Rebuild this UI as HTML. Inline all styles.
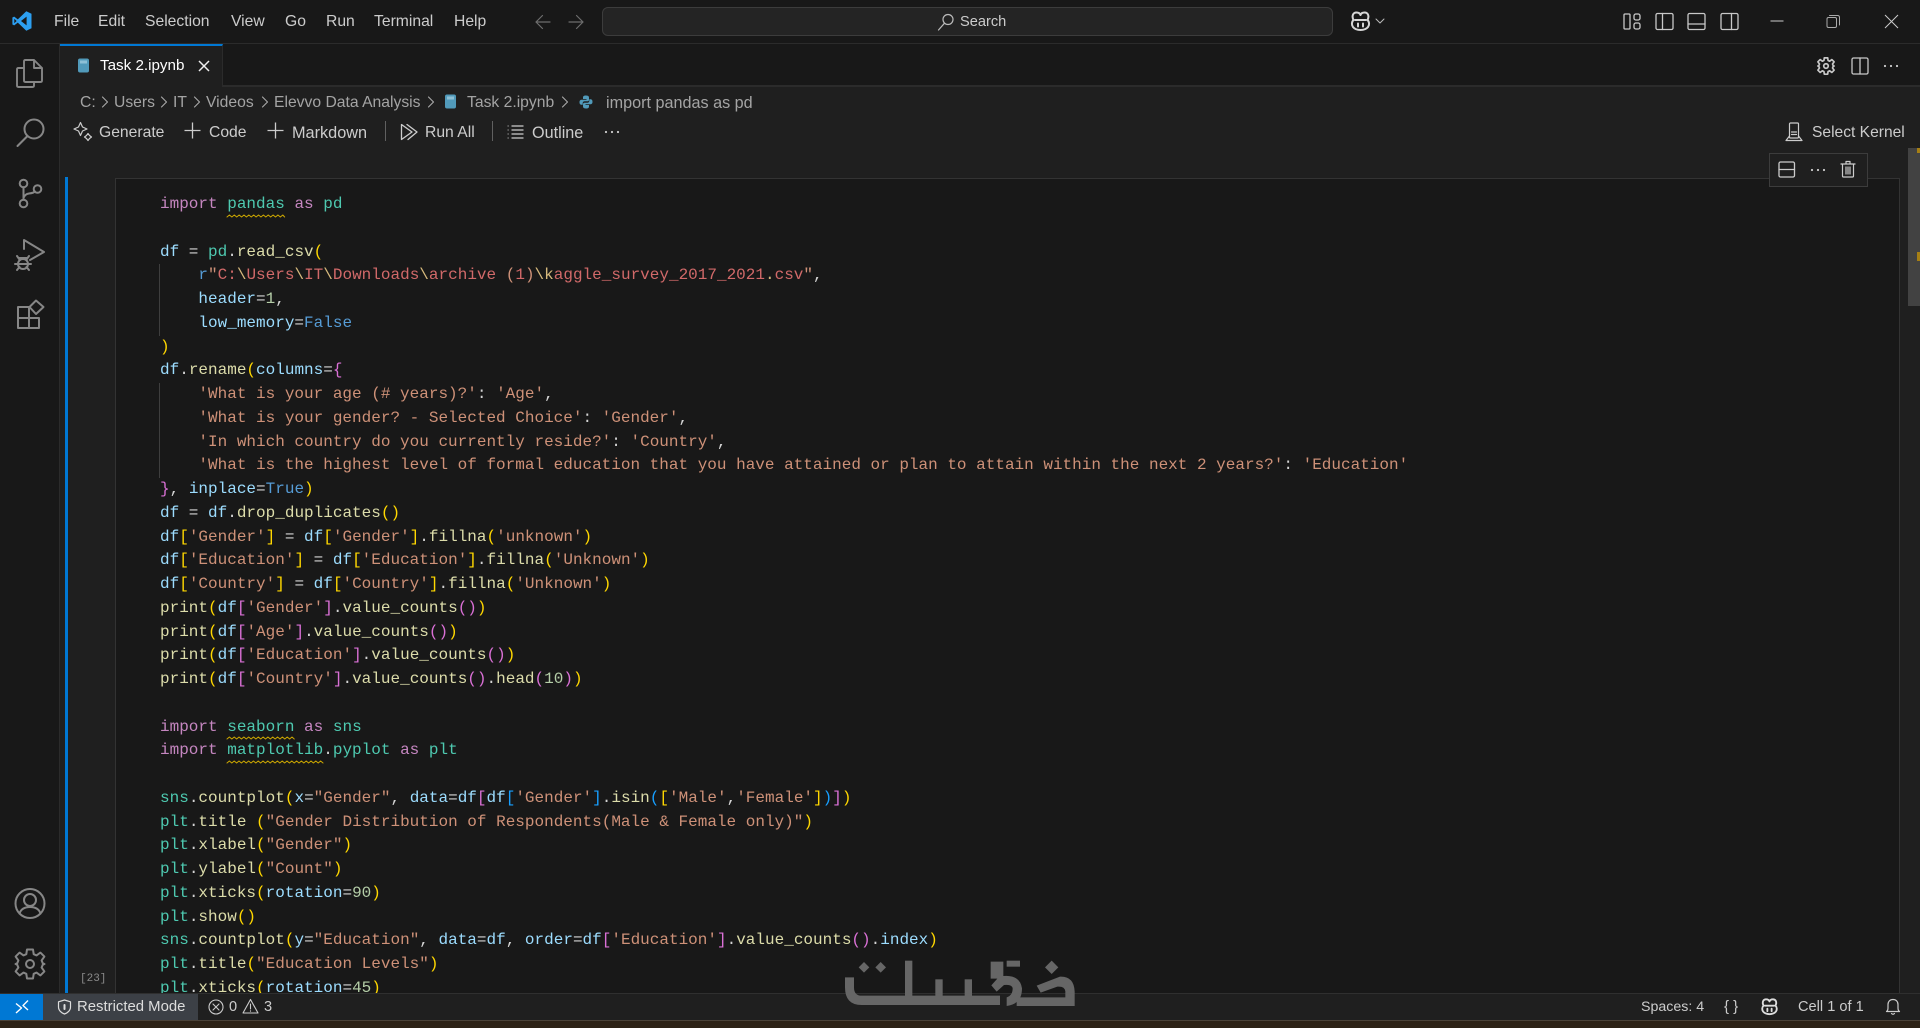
<!DOCTYPE html>
<html lang="en">
<head>
<meta charset="utf-8">
<title>Task 2.ipynb</title>
<style>
html,body{margin:0;padding:0;width:1920px;height:1028px;overflow:hidden;background:#1f1f1f}
*{box-sizing:border-box}
.a{position:absolute}
.t{position:absolute;font:15.7px/20px "Liberation Sans",sans-serif;color:#ccc;white-space:pre}
.bc{color:#a4a4a4}
.st{font-size:14.6px;color:#ccc}
svg{position:absolute;overflow:visible;fill:none;stroke-linecap:round;stroke-linejoin:round}
svg.dots{fill:#ccc}
#code{position:absolute;left:160px;top:193.2px;font:16px/23.75px "Liberation Mono",monospace;color:#d4d4d4;white-space:pre;margin:0}
#code div{height:23.75px}
.k{color:#c586c0}.m{color:#4ec9b0}.v{color:#9cdcfe}.f{color:#dcdcaa}.s{color:#ce9178}.n{color:#b5cea8}.c{color:#569cd6}.r{color:#d16969}.y{color:#ffd700}.p{color:#da70d6}.b{color:#179fff}.e{color:#d7ba7d}
.w{position:relative}
.w svg{left:0;top:18.5px;width:100%;height:4px}
</style>
</head>
<body>
<!-- title bar -->
<div class="a" style="left:0;top:0;width:1920px;height:44px;background:#181818;border-bottom:1px solid #2b2b2b"></div>
<svg style="left:12px;top:11px" width="20" height="20" viewBox="0 0 20 20"><path d="M14.3 0.3 19.5 2.8V17.2L14.3 19.7 5.8 11.6 2.2 14.4.4 13.5V6.5L2.2 5.6 5.8 8.4Z M14.6 5.6 9 10l5.6 4.4Z M2.3 7.7V12.3L4.6 10Z" fill="#2c9ff1" fill-rule="evenodd"/></svg>
<div class="t" style="left:54px;top:12px">File</div>
<div class="t" style="left:98px;top:12px">Edit</div>
<div class="t" style="left:145px;top:12px">Selection</div>
<div class="t" style="left:231px;top:12px">View</div>
<div class="t" style="left:285px;top:12px">Go</div>
<div class="t" style="left:326px;top:12px">Run</div>
<div class="t" style="left:374px;top:12px">Terminal</div>
<div class="t" style="left:454px;top:12px">Help</div>
<svg style="left:535px;top:14px" width="16" height="16" stroke="#6d6d6d" stroke-width="1.2"><path d="M1 8H15M1 8 7.5 1.5M1 8 7.5 14.5"/></svg>
<svg style="left:568px;top:14px" width="16" height="16" stroke="#6d6d6d" stroke-width="1.2"><path d="M1 8H15M15 8 8.5 1.5M15 8 8.5 14.5"/></svg>
<div class="a" style="left:602px;top:7px;width:731px;height:29px;background:#242424;border:1px solid #3c3c3c;border-radius:6px"></div>
<svg style="left:937px;top:13px" width="18" height="18" stroke="#bbb" stroke-width="1.2"><circle cx="11" cy="6.5" r="5"/><path d="M7.5 10.2 1.5 17"/></svg>
<div class="t" style="left:960px;top:12px;font-size:14.6px">Search</div>
<!-- copilot top -->
<svg style="left:1350px;top:11px" width="21" height="20" viewBox="0 0 21 20" stroke="#d6d6d6" stroke-width="2"><path d="M3.5 9C1.5 5 3 1.5 6.5 1.5 8.5 1.5 10 2.5 10.5 4 11 2.5 12.5 1.5 14.5 1.5 18 1.5 19.5 5 17.5 9 19.5 11 19.5 14 18 16 16 18.5 13.5 19 10.5 19S5 18.5 3 16C1.5 14 1.5 11 3.5 9Z"/><path d="M5 9H16M8 12.5V15.5M13 12.5V15.5"/></svg>
<svg style="left:1375px;top:18px" width="10" height="7" stroke="#bbb" stroke-width="1"><path d="M1 1 5 5 9 1"/></svg>
<!-- layout icons -->
<svg style="left:1623px;top:12px" width="18" height="18" stroke="#c8c8c8" stroke-width="1.3"><rect x="1" y="2" width="6" height="15" rx="1"/><rect x="11" y="2" width="6" height="6" rx="1.8"/><rect x="11" y="11" width="6" height="6" rx="1.8"/></svg>
<svg style="left:1655px;top:12px" width="18" height="18" stroke="#c8c8c8" stroke-width="1.3"><rect x="1" y="1.5" width="17" height="16" rx="1.5"/><path d="M7.5 1.5V17.5"/></svg>
<svg style="left:1687px;top:12px" width="18" height="18" stroke="#c8c8c8" stroke-width="1.3"><rect x="1" y="1.5" width="17" height="16" rx="1.5"/><path d="M1 12H18"/></svg>
<svg style="left:1720px;top:12px" width="18" height="18" stroke="#c8c8c8" stroke-width="1.3"><rect x="1" y="1.5" width="17" height="16" rx="1.5"/><path d="M11.5 1.5V17.5"/></svg>
<svg style="left:1770px;top:20px" width="14" height="3" stroke="#ccc" stroke-width="1"><path d="M.5 1H13.5" stroke-linecap="butt"/></svg>
<svg style="left:1826px;top:14px" width="15" height="15" stroke="#aaa" stroke-width="1"><rect x="1" y="3.5" width="9.5" height="10" rx="1.5"/><path d="M3.5 1.5H11.5Q13.5 1.5 13.5 3.5V11"/></svg>
<svg style="left:1884px;top:14px" width="15" height="15" stroke="#ccc" stroke-width="1"><path d="M1 1 14 14M14 1 1 14" stroke-linecap="butt"/></svg>

<!-- activity bar -->
<div class="a" style="left:0;top:44px;width:60px;height:949px;background:#181818;border-right:1px solid #2b2b2b"></div>
<svg style="left:15px;top:58px" width="30" height="32" stroke="#868686" stroke-width="1.9"><path d="M9 22V3.5Q9 2 10.5 2H19L27 10V22.5Q27 24 25.5 24H10.5Q9 24 9 22.5Z M19 2V10H27"/><path d="M9 10H3.5Q2 10 2 11.5V27.5Q2 29 3.5 29H17.5Q19 29 19 27.5V24"/></svg>
<svg style="left:16px;top:118px" width="30" height="30" stroke="#868686" stroke-width="2"><circle cx="18" cy="11" r="9.5"/><path d="M11.5 18 1.5 28"/></svg>
<svg style="left:17px;top:178px" width="26" height="32" stroke="#868686" stroke-width="2"><circle cx="6.5" cy="5.5" r="3.8"/><circle cx="6.5" cy="25.5" r="3.8"/><circle cx="20.5" cy="11" r="3.8"/><path d="M6.5 9.3V21.7M6.5 20Q8 16 12 15.5 16.5 15 18 13.5"/></svg>
<svg style="left:14px;top:238px" width="32" height="34" stroke="#868686" stroke-width="2"><path d="M10 11V2L30 14 16 22"/><circle cx="9" cy="26" r="5"/><path d="M5.5 21.5 3 18M12.5 21.5 15 18M1 26H17M3 32 5.5 29M15 32 12.5 29M5 20H13"/></svg>
<svg style="left:16px;top:299px" width="30" height="30" stroke="#868686" stroke-width="2"><rect x="2" y="8" width="11" height="11"/><rect x="2" y="19" width="11" height="10"/><rect x="13" y="19" width="10" height="10"/><path d="M20 1.5 27.5 8 20 15 13.5 8Z"/></svg>
<svg style="left:14px;top:888px" width="32" height="32" stroke="#868686" stroke-width="2"><circle cx="16" cy="15.5" r="14.5"/><circle cx="16" cy="12" r="6"/><path d="M5.5 25.5C7 21 11 19 16 19S25 21 26.5 25.5"/></svg>
<svg style="left:14px;top:948px" width="32" height="32" viewBox="0 0 32 32" stroke="#868686" stroke-width="2"><path d="M13 1.5H19L19.7 6.2 22.5 7.4 26.4 4.6 30.4 8.6 27.6 12.5 28.8 15.3 30.5 16 28.8 16.7 27.6 19.5 30.4 23.4 26.4 27.4 22.5 24.6 19.7 25.8 19 30.5H13L12.3 25.8 9.5 24.6 5.6 27.4 1.6 23.4 4.4 19.5 3.2 16.7 1.5 16 3.2 15.3 4.4 12.5 1.6 8.6 5.6 4.6 9.5 7.4 12.3 6.2Z"/><circle cx="16" cy="16" r="4"/></svg>

<!-- tabs row -->
<div class="a" style="left:60px;top:44px;width:1860px;height:43px;background:#181818;border-bottom:2px solid #2b2b2b"></div>
<div class="a" style="left:60px;top:44px;width:163px;height:43px;background:#1f1f1f;border-top:2px solid #0078d4;border-right:1px solid #2b2b2b"></div>
<svg style="left:77px;top:58px" width="13" height="15"><rect x="1" y="0.5" width="11" height="14" rx="2" fill="#519aba"/><rect x="3" y="2.5" width="7" height="3" fill="#8dc0d6"/></svg>
<div class="t" style="left:100px;top:56px;color:#fff;font-size:15.2px">Task 2.ipynb</div>
<svg style="left:198px;top:60px" width="12" height="12" stroke="#eee" stroke-width="1.5"><path d="M1 1 11 11M11 1 1 11" stroke-linecap="butt"/></svg>
<!-- tab actions -->
<svg style="left:1817px;top:57px" width="18" height="18" viewBox="0 0 32 32" stroke="#c8c8c8" stroke-width="3"><path d="M13 1.5H19L19.7 6.2 22.5 7.4 26.4 4.6 30.4 8.6 27.6 12.5 28.8 15.3 30.5 16 28.8 16.7 27.6 19.5 30.4 23.4 26.4 27.4 22.5 24.6 19.7 25.8 19 30.5H13L12.3 25.8 9.5 24.6 5.6 27.4 1.6 23.4 4.4 19.5 3.2 16.7 1.5 16 3.2 15.3 4.4 12.5 1.6 8.6 5.6 4.6 9.5 7.4 12.3 6.2Z"/><circle cx="16" cy="16" r="4"/></svg>
<svg style="left:1851px;top:57px" width="18" height="18" stroke="#c8c8c8" stroke-width="1.3"><rect x="1" y="1" width="16" height="16" rx="1.5"/><path d="M9 1V17"/></svg>
<svg class="dots" style="left:1883px;top:64px" width="16" height="4"><circle cx="2" cy="2" r="1.1"/><circle cx="8" cy="2" r="1.1"/><circle cx="14" cy="2" r="1.1"/></svg>

<!-- breadcrumbs -->
<div class="t bc" style="left:80px;top:93px">C:</div>
<svg style="left:101px;top:96px" width="8" height="12" stroke="#aaa" stroke-width="1.1"><path d="M1.5 1 6.5 6 1.5 11"/></svg>
<div class="t bc" style="left:114px;top:93px">Users</div>
<svg style="left:160px;top:96px" width="8" height="12" stroke="#aaa" stroke-width="1.1"><path d="M1.5 1 6.5 6 1.5 11"/></svg>
<div class="t bc" style="left:173px;top:93px">IT</div>
<svg style="left:193px;top:96px" width="8" height="12" stroke="#aaa" stroke-width="1.1"><path d="M1.5 1 6.5 6 1.5 11"/></svg>
<div class="t bc" style="left:206px;top:93px">Videos</div>
<svg style="left:261px;top:96px" width="8" height="12" stroke="#aaa" stroke-width="1.1"><path d="M1.5 1 6.5 6 1.5 11"/></svg>
<div class="t bc" style="left:274px;top:93px">Elevvo Data Analysis</div>
<svg style="left:427px;top:96px" width="8" height="12" stroke="#aaa" stroke-width="1.1"><path d="M1.5 1 6.5 6 1.5 11"/></svg>
<svg style="left:444px;top:94px" width="13" height="15"><rect x="1" y="0.5" width="11" height="14" rx="2" fill="#519aba"/><rect x="3" y="2.5" width="7" height="3" fill="#8dc0d6"/></svg>
<div class="t bc" style="left:467px;top:93px">Task 2.ipynb</div>
<svg style="left:561px;top:96px" width="8" height="12" stroke="#aaa" stroke-width="1.1"><path d="M1.5 1 6.5 6 1.5 11"/></svg>
<svg style="left:579px;top:95px" width="14" height="14" viewBox="0 0 14 14"><path d="M7 .5C4.5.5 4 1.5 4 2.5V4H7.5V4.8H2.5C1 4.800.5 6 .5 7.3S1 9.800 2.5 9.800H3.7V8.300C3.700 7 4.500 6.300 5.700 6.300H8.500C9.500 6.300 10 5.500 10 4.700V2.500C10 1.300 9 .5 7 .5Z" fill="#519aba"/><path d="M7 13.500C9.500 13.500 10 12.500 10 11.500V10H6.500V9.200H11.500C13 9.200 13.500 8 13.500 6.700S13 4.200 11.500 4.200H10.300V5.700C10.300 7 9.500 7.700 8.300 7.700H5.500C4.500 7.700 4 8.500 4 9.300V11.500C4 12.700 5 13.500 7 13.500Z" fill="#519aba"/></svg>
<div class="t bc" style="left:606px;top:93px;font-size:16.2px">import pandas as pd</div>

<!-- toolbar -->
<svg style="left:73px;top:121px" width="20" height="20" stroke="#ccc" stroke-width="1.2"><path d="M7.5 1.5 9.5 6 14 8 9.5 10 7.5 14.5 5.5 10 1 8 5.5 6Z"/><path d="M15 12.500 16.500 14.500 18.500 16 16.500 17.500 15 19.500 13.500 17.500 11.500 16 13.500 14.500Z"/></svg>
<div class="t" style="left:99px;top:123px">Generate</div>
<svg style="left:184px;top:122px" width="17" height="17" stroke="#ccc" stroke-width="1.3"><path d="M8.500 .5V16.500M.5 8.500H16.500" stroke-linecap="butt"/></svg>
<div class="t" style="left:209px;top:123px">Code</div>
<svg style="left:267px;top:122px" width="17" height="17" stroke="#ccc" stroke-width="1.3"><path d="M8.500 .5V16.500M.5 8.500H16.500" stroke-linecap="butt"/></svg>
<div class="t" style="left:292px;top:123px;font-size:16.3px">Markdown</div>
<div class="a" style="left:385px;top:121px;width:1px;height:20px;background:#606060"></div>
<svg style="left:400px;top:123px" width="18" height="18" stroke="#ccc" stroke-width="1.3"><path d="M1.500 1.500V16.500L12 9Z"/><path d="M7 1.500 17 9 8 16.500"/></svg>
<div class="t" style="left:425px;top:123px">Run All</div>
<div class="a" style="left:492px;top:121px;width:1px;height:20px;background:#606060"></div>
<svg style="left:507px;top:125px" width="17" height="14" stroke="#ccc" stroke-width="1.2"><path d="M4.500 1H16.500M4.500 5H16.500M4.500 9H16.500M4.500 13H16.500M.7 1H1.500M.7 5H1.500M.7 9H1.500M.7 13H1.500" stroke-linecap="butt"/></svg>
<div class="t" style="left:532px;top:123px;font-size:16.2px">Outline</div>
<svg class="dots" style="left:604px;top:130px" width="16" height="4"><circle cx="2" cy="2" r="1.1"/><circle cx="8" cy="2" r="1.1"/><circle cx="14" cy="2" r="1.1"/></svg>
<svg style="left:1785px;top:122px" width="18" height="20" stroke="#ccc" stroke-width="1.2"><rect x="4.500" y="1" width="9" height="15" rx="1"/><path d="M6.500 10H11.500M6.500 12.500H11.500M4.500 14 1 18.500H17L13.500 14"/></svg>
<div class="t" style="left:1812px;top:123px;font-size:15.6px">Select Kernel</div>

<!-- cell -->
<div class="a" style="left:65px;top:177px;width:3px;height:816px;background:#0078d4"></div>
<div class="a" style="left:115px;top:178px;width:1785px;height:815px;background:#181818;border:1px solid #333;border-bottom:0"></div>
<div class="a" style="left:159px;top:264px;width:1px;height:72px;background:#3e3e3e"></div>
<div class="a" style="left:159px;top:383px;width:1px;height:95px;background:#3e3e3e"></div>
<div class="t" style="left:80px;top:969px;font:11px/20px 'Liberation Mono',monospace;color:#8a8a8a">[23]</div>

<div class="a" style="left:0;top:0;width:1920px;height:993px;overflow:hidden;pointer-events:none">
<pre id="code"><div><span class="k">import</span> <span class="m w">pandas<svg viewBox="0 0 57 4" preserveAspectRatio="none" stroke="#cca700" stroke-width="1"><path d="M0 3 2.400 1 4.800 3 7.200 1 9.600 3 12 1 14.400 3 16.800 1 19.200 3 21.600 1 24 3 26.400 1 28.800 3 31.200 1 33.600 3 36 1 38.400 3 40.800 1 43.200 3 45.600 1 48 3 50.400 1 52.800 3 55.200 1 57 3"/></svg></span> <span class="k">as</span> <span class="m">pd</span></div><div> </div><div><span class="v">df</span> = <span class="m">pd</span>.<span class="f">read_csv</span><span class="y">(</span></div><div>    <span class="c">r</span><span class="s">"</span><span class="r">C:</span><span class="e">\</span><span class="r">Users</span><span class="e">\</span><span class="r">IT</span><span class="e">\</span><span class="r">Downloads</span><span class="e">\</span><span class="r">archive </span><span class="s">(</span><span class="r">1</span><span class="s">)</span><span class="e">\k</span><span class="r">aggle_survey_2017_2021</span><span class="e">.</span><span class="r">csv</span><span class="s">"</span>,</div><div>    <span class="v">header</span>=<span class="n">1</span>,</div><div>    <span class="v">low_memory</span>=<span class="c">False</span></div><div><span class="y">)</span></div><div><span class="v">df</span>.<span class="f">rename</span><span class="y">(</span><span class="v">columns</span>=<span class="p">{</span></div><div>    <span class="s">'What is your age (# years)?'</span>: <span class="s">'Age'</span>,</div><div>    <span class="s">'What is your gender? - Selected Choice'</span>: <span class="s">'Gender'</span>,</div><div>    <span class="s">'In which country do you currently reside?'</span>: <span class="s">'Country'</span>,</div><div>    <span class="s">'What is the highest level of formal education that you have attained or plan to attain within the next 2 years?'</span>: <span class="s">'Education'</span></div><div><span class="p">}</span>, <span class="v">inplace</span>=<span class="c">True</span><span class="y">)</span></div><div><span class="v">df</span> = <span class="v">df</span>.<span class="f">drop_duplicates</span><span class="y">()</span></div><div><span class="v">df</span><span class="y">[</span><span class="s">'Gender'</span><span class="y">]</span> = <span class="v">df</span><span class="y">[</span><span class="s">'Gender'</span><span class="y">]</span>.<span class="f">fillna</span><span class="y">(</span><span class="s">'unknown'</span><span class="y">)</span></div><div><span class="v">df</span><span class="y">[</span><span class="s">'Education'</span><span class="y">]</span> = <span class="v">df</span><span class="y">[</span><span class="s">'Education'</span><span class="y">]</span>.<span class="f">fillna</span><span class="y">(</span><span class="s">'Unknown'</span><span class="y">)</span></div><div><span class="v">df</span><span class="y">[</span><span class="s">'Country'</span><span class="y">]</span> = <span class="v">df</span><span class="y">[</span><span class="s">'Country'</span><span class="y">]</span>.<span class="f">fillna</span><span class="y">(</span><span class="s">'Unknown'</span><span class="y">)</span></div><div><span class="f">print</span><span class="y">(</span><span class="v">df</span><span class="p">[</span><span class="s">'Gender'</span><span class="p">]</span>.<span class="f">value_counts</span><span class="p">()</span><span class="y">)</span></div><div><span class="f">print</span><span class="y">(</span><span class="v">df</span><span class="p">[</span><span class="s">'Age'</span><span class="p">]</span>.<span class="f">value_counts</span><span class="p">()</span><span class="y">)</span></div><div><span class="f">print</span><span class="y">(</span><span class="v">df</span><span class="p">[</span><span class="s">'Education'</span><span class="p">]</span>.<span class="f">value_counts</span><span class="p">()</span><span class="y">)</span></div><div><span class="f">print</span><span class="y">(</span><span class="v">df</span><span class="p">[</span><span class="s">'Country'</span><span class="p">]</span>.<span class="f">value_counts</span><span class="p">()</span>.<span class="f">head</span><span class="p">(</span><span class="n">10</span><span class="p">)</span><span class="y">)</span></div><div> </div><div><span class="k">import</span> <span class="m w">seaborn<svg viewBox="0 0 67 4" preserveAspectRatio="none" stroke="#cca700" stroke-width="1"><path d="M0 3 2.400 1 4.800 3 7.200 1 9.600 3 12 1 14.400 3 16.800 1 19.200 3 21.600 1 24 3 26.400 1 28.800 3 31.200 1 33.600 3 36 1 38.400 3 40.800 1 43.200 3 45.600 1 48 3 50.400 1 52.800 3 55.200 1 57.600 3 60 1 62.400 3 64.800 1 67 3"/></svg></span> <span class="k">as</span> <span class="m">sns</span></div><div><span class="k">import</span> <span class="m w">matplotlib<svg viewBox="0 0 96 4" preserveAspectRatio="none" stroke="#cca700" stroke-width="1"><path d="M0 3 2.400 1 4.800 3 7.200 1 9.600 3 12 1 14.400 3 16.800 1 19.200 3 21.600 1 24 3 26.400 1 28.800 3 31.200 1 33.600 3 36 1 38.400 3 40.800 1 43.200 3 45.600 1 48 3 50.400 1 52.800 3 55.200 1 57.600 3 60 1 62.400 3 64.800 1 67.200 3 69.600 1 72 3 74.400 1 76.800 3 79.200 1 81.600 3 84 1 86.400 3 88.800 1 91.200 3 93.600 1 96 3"/></svg></span>.<span class="m">pyplot</span> <span class="k">as</span> <span class="m">plt</span></div><div> </div><div><span class="m">sns</span>.<span class="f">countplot</span><span class="y">(</span><span class="v">x</span>=<span class="s">"Gender"</span>, <span class="v">data</span>=<span class="v">df</span><span class="p">[</span><span class="v">df</span><span class="b">[</span><span class="s">'Gender'</span><span class="b">]</span>.<span class="f">isin</span><span class="b">(</span><span class="y">[</span><span class="s">'Male'</span>,<span class="s">'Female'</span><span class="y">]</span><span class="b">)</span><span class="p">]</span><span class="y">)</span></div><div><span class="m">plt</span>.<span class="f">title</span> <span class="y">(</span><span class="s">"Gender Distribution of Respondents(Male &amp; Female only)"</span><span class="y">)</span></div><div><span class="m">plt</span>.<span class="f">xlabel</span><span class="y">(</span><span class="s">"Gender"</span><span class="y">)</span></div><div><span class="m">plt</span>.<span class="f">ylabel</span><span class="y">(</span><span class="s">"Count"</span><span class="y">)</span></div><div><span class="m">plt</span>.<span class="f">xticks</span><span class="y">(</span><span class="v">rotation</span>=<span class="n">90</span><span class="y">)</span></div><div><span class="m">plt</span>.<span class="f">show</span><span class="y">()</span></div><div><span class="m">sns</span>.<span class="f">countplot</span><span class="y">(</span><span class="v">y</span>=<span class="s">"Education"</span>, <span class="v">data</span>=<span class="v">df</span>, <span class="v">order</span>=<span class="v">df</span><span class="p">[</span><span class="s">'Education'</span><span class="p">]</span>.<span class="f">value_counts</span><span class="p">()</span>.<span class="v">index</span><span class="y">)</span></div><div><span class="m">plt</span>.<span class="f">title</span><span class="y">(</span><span class="s">"Education Levels"</span><span class="y">)</span></div><div><span class="m">plt</span>.<span class="f">xticks</span><span class="y">(</span><span class="v">rotation</span>=<span class="n">45</span><span class="y">)</span></div></pre>
</div>

<!-- cell toolbar -->
<div class="a" style="left:1769px;top:153px;width:99px;height:34px;background:#1f1f1f;border:1px solid #3c3c3c"></div>
<svg style="left:1778px;top:161px" width="18" height="17" stroke="#ccc" stroke-width="1.3"><rect x="1" y="1" width="15.500" height="15" rx="1.500"/><path d="M1 8.500H16.500"/></svg>
<svg class="dots" style="left:1810px;top:168px" width="16" height="4"><circle cx="2" cy="2" r="1.1"/><circle cx="8" cy="2" r="1.1"/><circle cx="14" cy="2" r="1.1"/></svg>
<svg style="left:1840px;top:160px" width="16" height="18" stroke="#ccc" stroke-width="1.2"><path d="M1 4H15M6 4V1.500H10V4M2.500 4V16Q2.500 17 3.500 17H12.500Q13.500 17 13.500 16V4M6 7V14M8 7V14M10 7V14"/></svg>

<!-- scrollbar -->
<div class="a" style="left:1908px;top:148px;width:12px;height:158px;background:#424242"></div>
<div class="a" style="left:1917px;top:148px;width:3px;height:5px;background:#a67f14"></div>
<div class="a" style="left:1917px;top:252px;width:3px;height:9px;background:#a67f14"></div>

<!-- status bar -->
<div class="a" style="left:0;top:993px;width:1920px;height:28px;background:#1f1f1f;border-top:1px solid #2f2f2f"></div>
<div class="a" style="left:0;top:994px;width:43px;height:27px;background:#0078d4"></div>
<svg style="left:15px;top:999px" width="14" height="16" stroke="#fff" stroke-width="1.4"><path d="M1 14 6.500 9 1 4.500" stroke-linecap="butt"/><path d="M13 1.500 8 6.500 13 11" stroke-linecap="butt"/></svg>
<div class="a" style="left:43px;top:994px;width:155px;height:27px;background:#3c4046"></div>
<svg style="left:57px;top:999px" width="15" height="16" stroke="#ddd" stroke-width="1.2"><path d="M7.500 1 13.500 2.800V8C13.500 11.500 10.500 14 7.500 15 4.500 14 1.500 11.500 1.500 8V2.800Z"/><path d="M7.500 6V10" stroke-width="2"/></svg>
<div class="t st" style="left:77px;top:997px;color:#ddd;font-size:14.9px">Restricted Mode</div>
<svg style="left:208px;top:999px" width="16" height="16" stroke="#ccc" stroke-width="1.1"><circle cx="8" cy="8" r="7"/><path d="M5 5 11 11M11 5 5 11"/></svg>
<div class="t st" style="left:229px;top:997px">0</div>
<svg style="left:242px;top:998px" width="17" height="16" stroke="#ccc" stroke-width="1.1"><path d="M8.500 1.500 16 15H1Z"/><path d="M8.500 6V11M8.500 12.800V13.200"/></svg>
<div class="t st" style="left:264px;top:997px">3</div>
<div class="t st" style="left:1641px;top:997px;font-size:14.2px">Spaces: 4</div>
<div class="t" style="left:1724px;top:997px;font-size:15px">{ }</div>
<svg style="left:1760px;top:998px" width="19" height="17" viewBox="0 0 21 20" stroke="#ddd" stroke-width="2.2"><path d="M3.5 9C1.5 5 3 1.5 6.5 1.5 8.5 1.5 10 2.5 10.5 4 11 2.5 12.5 1.5 14.5 1.5 18 1.5 19.5 5 17.5 9 19.5 11 19.5 14 18 16 16 18.5 13.5 19 10.5 19S5 18.5 3 16C1.5 14 1.5 11 3.5 9Z"/><path d="M5 9H16M8 12.500V15.500M13 12.500V15.500"/></svg>
<div class="t st" style="left:1798px;top:997px">Cell 1 of 1</div>
<svg style="left:1885px;top:998px" width="16" height="18" stroke="#ccc" stroke-width="1.2"><path d="M1.500 13.500Q3 12.500 3 10V6.500C3 3.500 5 1.500 8 1.500S13 3.500 13 6.500V10Q13 12.500 14.500 13.500Z"/><path d="M6.500 15.500Q8 17 9.500 15.500"/></svg>

<!-- windows taskbar strip -->
<div class="a" style="left:0;top:1020px;width:1920px;height:8px;background:#2c2216;border-top:1px solid #4a4238"></div>

<!-- watermark logo -->
<svg style="left:840px;top:950px" width="250" height="60" viewBox="0 0 750 180" stroke="none">
<g fill="#666">
<path d="M72 36 88 52 72 68 56 52ZM122 36 138 52 122 68 106 52ZM635 32 655 52 635 72 615 52Z"/>
<rect x="195" y="32" width="22" height="108"/>
<rect x="286" y="88" width="22" height="52"/>
<rect x="374" y="88" width="22" height="52"/>
<path d="M15 82H42V112Q42 137 65 137H480V165H65Q15 165 15 112Z"/>
<path d="M452 35H490V78Q540 74 546 115 546 162 500 168V142Q518 136 518 115 516 102 492 105L470 125 454 106 472 86H452Z"/>
<rect x="500" y="32" width="40" height="18"/>
<path d="M590 107 660 80Q702 78 704 125V168H530V142H676V124Q674 108 652 110L602 128Z"/>
</g>
</svg>
</body>
</html>
